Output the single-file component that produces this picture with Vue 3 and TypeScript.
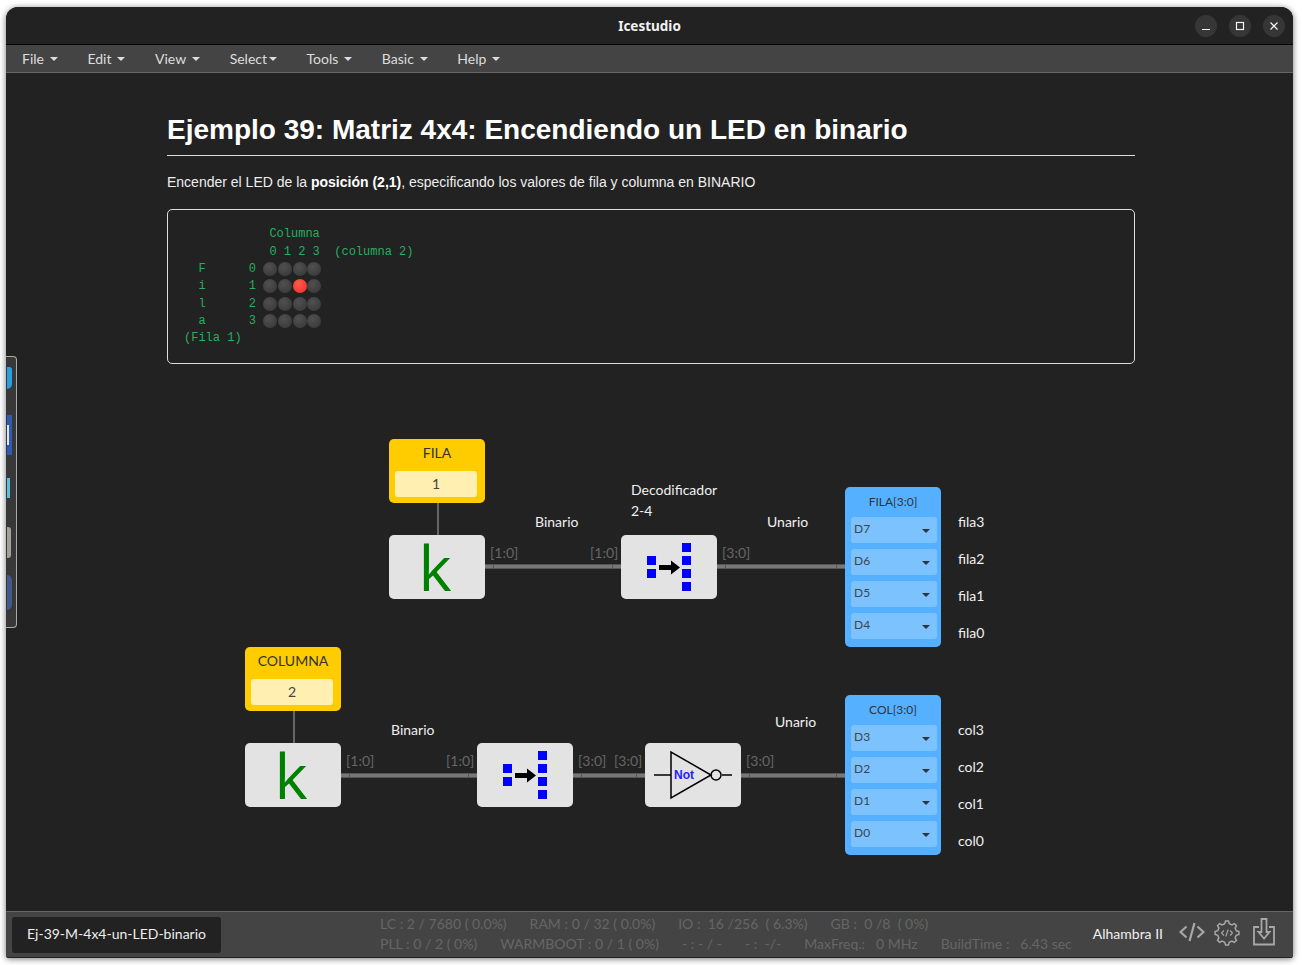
<template>
  <div class="desktop">
    <div class="window">
      <header class="titlebar">
        <span class="titlebar__name">Icestudio</span>
        <div class="titlebar__buttons">
          <button class="win-btn"><svg width="12" height="12" viewBox="0 0 12 12"><path d="M2 9.500h8" /></svg></button>
          <button class="win-btn"><svg width="12" height="12" viewBox="0 0 12 12"><rect x="2.500" y="2.500" width="7" height="7" /></svg></button>
          <button class="win-btn"><svg width="12" height="12" viewBox="0 0 12 12"><path d="M2.500 2.500l7 7M9.500 2.500l-7 7" /></svg></button>
        </div>
      </header>

      <nav class="menubar">
        <span v-for="m in menus" :key="m" :class="['menu', { 'is-tight': m === 'Select' }]">{{ m }}<i class="caret" /></span>
      </nav>

      <main class="content">
        <h1 class="heading">Ejemplo 39: Matriz 4x4: Encendiendo un LED en binario</h1>
        <p class="lead">Encender el LED de la <strong>posición (2,1)</strong>, especificando los valores de fila y columna en BINARIO</p>
        <pre class="code"><template v-for="(line, i) in codeHead" :key="i"><span class="code__line is-head">{{ line }}</span></template><span v-for="r in ledRows" :key="r.n" class="code__line">{{ r.text }}<i v-for="c in 4" :key="c" :class="['led', { 'is-on': r.on === c - 1 }]" /></span><span class="code__line">(Fila 1)</span></pre>

        <section class="canvas">
          <div v-for="w in wires" :key="`${w.x}-${w.y}`" class="wire" :style="box(w.x, w.y, w.w)" />
          <div v-for="v in stems" :key="v.x" class="stem" :style="box(v.x, v.y)" />
          <span v-for="t in busTags" :key="`${t.x}-${t.y}`" class="bus-tag" :style="box(t.x, t.y)">{{ t.text }}</span>
          <span v-for="t in notes" :key="`${t.x}-${t.y}`" class="note" :style="box(t.x, t.y)">{{ t.text }}</span>

          <div v-for="c in constants" :key="c.name" class="constant" :style="box(c.x, c.y)">
            <span class="constant__name">{{ c.name }}</span>
            <span class="constant__value">{{ c.value }}</span>
          </div>

          <div v-for="k in keys" :key="k.x" class="block block--k" :style="box(k.x, k.y)"><span>k</span></div>

          <div v-for="d in decoders" :key="d.x" class="block" :style="box(d.x, d.y)">
            <svg width="96" height="64" viewBox="0 0 96 64">
              <g fill="#0000ff">
                <rect x="26" y="21" width="9" height="9" /><rect x="26" y="34" width="9" height="9" />
                <rect x="61" y="8" width="9" height="9" /><rect x="61" y="21" width="9" height="9" />
                <rect x="61" y="34" width="9" height="9" /><rect x="61" y="47" width="9" height="9" />
              </g>
              <path d="M38 30h12v-4.500l9 7-9 7v-4.500h-12z" fill="#000" />
            </svg>
          </div>

          <div class="block" :style="box(645, 743)">
            <svg width="96" height="64" viewBox="0 0 96 64">
              <g fill="none" stroke="#000" stroke-width="1.500">
                <path d="M26 9v46l40-23zM9 32h17M77 32h10" />
                <circle cx="71" cy="32" r="5" />
              </g>
              <text x="29" y="36" class="not-label">Not</text>
            </svg>
          </div>

          <div v-for="o in outputs" :key="o.name" class="output" :style="box(o.x, o.y)">
            <span class="output__name">{{ o.name }}</span>
            <div v-for="p in o.pins" :key="p" class="pin"><span>{{ p }}</span><i class="pin__caret" /></div>
          </div>
        </section>
      </main>

      <footer class="statusbar">
        <div class="tab">Ej-39-M-4x4-un-LED-binario</div>
        <div class="stats">
          <div class="stats__row"><span v-for="s in statsTop" :key="s">{{ s }}</span></div>
          <div class="stats__row"><span v-for="s in statsBottom" :key="s">{{ s }}</span></div>
        </div>
        <span class="board">Alhambra II</span>
        <svg class="tool tool--code" width="26" height="20" viewBox="0 0 26 20"><path d="M7.500 4.500L1.500 10l6 5.500M18.500 4.500l6 5.500-6 5.500M15.500 1l-5 18" /></svg>
        <svg class="tool tool--gear" width="26" height="26" viewBox="0 0 26 26">
          <path :d="gearPath" stroke-width="1.500" />
          <path d="M10 10.500L7.500 13l2.500 2.500M16 10.500l2.500 2.500-2.500 2.500M14.200 9.500l-2.400 7" stroke-width="1.100" />
        </svg>
        <svg class="tool tool--save" width="24" height="28" viewBox="0 0 24 28"><path d="M7 9H2v17.500h20V9h-5M12 20.500l-5.500-6.500h3V1h5v13h3z" /></svg>
      </footer>

      <aside class="dock">
        <i v-for="(s, i) in dockItems" :key="i" :style="s" />
      </aside>
    </div>
  </div>
</template>

<script setup lang="ts">
const ORIGIN_X = 167
const ORIGIN_Y = 364

const menus = ['File', 'Edit', 'View', 'Select', 'Tools', 'Basic', 'Help']

const codeHead = [
  '            Columna',
  '            0 1 2 3  (columna 2)',
]
const ledRows = [
  { n: 0, text: '  F      0 ', on: -1 },
  { n: 1, text: '  i      1 ', on: 2 },
  { n: 2, text: '  l      2 ', on: -1 },
  { n: 3, text: '  a      3 ', on: -1 },
]

// everything on the canvas is written in window pixels, box() moves it to the canvas origin
function box(x: number, y: number, w?: number) {
  return { left: `${x - ORIGIN_X}px`, top: `${y - ORIGIN_Y}px`, ...(w ? { width: `${w}px` } : {}) }
}

const wires = [
  { x: 485, y: 564, w: 136 },
  { x: 717, y: 564, w: 128 },
  { x: 341, y: 773, w: 136 },
  { x: 573, y: 773, w: 72 },
  { x: 741, y: 773, w: 104 },
]
const stems = [{ x: 437, y: 503 }, { x: 293, y: 711 }]
const busTags = [
  { x: 490, y: 544, text: '[1:0]' }, { x: 590, y: 544, text: '[1:0]' }, { x: 722, y: 544, text: '[3:0]' },
  { x: 346, y: 752, text: '[1:0]' }, { x: 446, y: 752, text: '[1:0]' }, { x: 578, y: 752, text: '[3:0]' },
  { x: 614, y: 752, text: '[3:0]' }, { x: 746, y: 752, text: '[3:0]' },
]
const notes = [
  { x: 535, y: 513, text: 'Binario' }, { x: 631, y: 481, text: 'Decodificador' }, { x: 631, y: 502, text: '2-4' },
  { x: 767, y: 513, text: 'Unario' }, { x: 391, y: 721, text: 'Binario' }, { x: 775, y: 713, text: 'Unario' },
  { x: 958, y: 513, text: 'fila3' }, { x: 958, y: 550, text: 'fila2' }, { x: 958, y: 587, text: 'fila1' }, { x: 958, y: 624, text: 'fila0' },
  { x: 958, y: 721, text: 'col3' }, { x: 958, y: 758, text: 'col2' }, { x: 958, y: 795, text: 'col1' }, { x: 958, y: 832, text: 'col0' },
]
const constants = [
  { name: 'FILA', value: '1', x: 389, y: 439 },
  { name: 'COLUMNA', value: '2', x: 245, y: 647 },
]
const keys = [{ x: 389, y: 535 }, { x: 245, y: 743 }]
const decoders = [{ x: 621, y: 535 }, { x: 477, y: 743 }]
const outputs = [
  { name: 'FILA[3:0]', x: 845, y: 487, pins: ['D7', 'D6', 'D5', 'D4'] },
  { name: 'COL[3:0]', x: 845, y: 695, pins: ['D3', 'D2', 'D1', 'D0'] },
]

const statsTop = ['LC : 2 / 7680 ( 0.0%)', 'RAM : 0 / 32 ( 0.0%)', 'IO :  16 /256  ( 6.3%)', 'GB :  0 /8  ( 0%)']
const statsBottom = ['PLL : 0 / 2 ( 0%)', 'WARMBOOT : 0 / 1 ( 0%)', '- : - / -', '- :  -/-', 'MaxFreq.:   0 MHz', 'BuildTime :   6.43 sec']

// outline of a cog with 8 teeth
const gearPath = (() => {
  const pts: string[] = []
  const teeth = 8
  for (let i = 0; i < teeth; i++) {
    const a = (i / teeth) * Math.PI * 2
    const step = (Math.PI * 2) / teeth
    const corners: [number, number][] = [[9.500, -0.5], [12, -0.25], [12, 0.25], [9.500, 0.5]]
    for (const [r, f] of corners) {
      const t = a + f * step * 0.62
      pts.push(`${(13 + r * Math.cos(t)).toFixed(2)} ${(13 + r * Math.sin(t)).toFixed(2)}`)
    }
  }
  return `M${pts.join('L')}Z`
})()

const dockItems = [
  { top: '10px', height: '22px', width: '5px', background: '#2a9fe0', borderRadius: '0 4px 8px 0' },
  { top: '58px', height: '40px', width: '5px', background: 'linear-gradient(90deg,#dfe6f5 2px,transparent 2px) center/100% 20px no-repeat,#2f5bb5' },
  { top: '121px', height: '20px', width: '3px', background: '#5cc0dd' },
  { top: '170px', height: '31px', width: '4px', background: '#a2a29a', borderRadius: '0 3px 3px 0' },
  { top: '218px', height: '35px', width: '5px', background: '#42598c', borderRadius: '0 8px 8px 0' },
]
</script>

<style scoped>
.desktop { box-sizing: border-box; width: 1302px; height: 965px; padding: 7px 9px 7px 6px; }
.window { position: relative; display: flex; flex-direction: column; height: 100%; overflow: hidden; background: #222; border-radius: 12px 12px 3px 3px; box-shadow: 0 1px 6px rgba(0, 0, 0, .55); font-family: Lato, sans-serif; }

.titlebar { position: relative; display: flex; flex: 0 0 38px; align-items: center; justify-content: center; box-sizing: border-box; background: #222; border-bottom: 1px solid #000; }
.titlebar__name { color: #f2f2f2; font-family: "Noto Sans", sans-serif; font-size: 13.500px; font-weight: 700; }
.titlebar__buttons { position: absolute; top: 8px; right: 8px; display: flex; gap: 12px; }
.win-btn { display: flex; align-items: center; justify-content: center; width: 22px; height: 22px; padding: 0; background: #363636; border: 0; border-radius: 50%; }
.win-btn svg { fill: none; stroke: #f4f4f4; stroke-width: 1.200; }

.menubar { display: flex; flex: 0 0 28px; align-items: center; gap: 29.500px; box-sizing: border-box; padding: 0 0 1px 16px; background: #444; border-bottom: 1px solid #666; color: #ddd; font-size: 14px; }
.menu { display: flex; align-items: center; }
.caret { width: 0; height: 0; margin: 2px 0 0 6px; border-top: 4px solid #ddd; border-right: 4px solid transparent; border-left: 4px solid transparent; }
.menu.is-tight .caret { margin-left: 2px; }

.content { flex: 1; min-height: 0; width: 968px; margin-left: 161px; }
.heading { margin: 0; padding: 39px 0 7px; border-bottom: 1px solid #ddd; color: #fff; font: 700 28px/36px "Liberation Sans", sans-serif; }
.lead { margin: 16px 0 0; color: #eee; font: 14px/20px "Liberation Sans", sans-serif; }
.lead strong { color: #fff; }
.code { box-sizing: border-box; height: 155px; margin: 17px 0 0; padding: 16px 16px 0; border: 1px solid #ddd; border-radius: 5px; color: #27ae60; font: 12px/17.300px "Liberation Mono", monospace; }
.code__line { display: flex; align-items: center; height: 17.300px; white-space: pre; }
.code__line.is-head { height: 17.500px; margin-left: -1px; }
.led { width: 14px; height: 14px; margin: 0 .7px 1px 0; border-radius: 50%; background: radial-gradient(circle at 40% 35%, #505050, #3d3d3d 70%); }
.led.is-on { background: radial-gradient(circle at 40% 35%, #ff5a4e, #ef3a30 70%); }

.canvas { position: relative; height: 547px; }
.wire { position: absolute; box-sizing: border-box; height: 5px; background: #777; border-top: 1px solid #555; border-bottom: 1px solid #555; }
.wire::before, .wire::after { content: ''; position: absolute; top: -1px; width: 1px; height: 5px; background: #555; }
.wire::before { left: 8px; }
.wire::after { right: 8px; }
.stem { position: absolute; width: 2px; height: 32px; background: #666; }
.bus-tag { position: absolute; color: #666; font-size: 14px; line-height: 18px; }
.note { position: absolute; color: #f0f0f0; font-size: 14px; line-height: 18px; white-space: nowrap; }

.constant { position: absolute; display: flex; flex-direction: column; align-items: center; box-sizing: border-box; width: 96px; height: 64px; padding: 6px 8px 0 6px; background: #fc0; border-radius: 5px; color: #333; font-size: 14px; }
.constant__name { margin-left: 2px; line-height: 16px; }
.constant__value { width: 100%; margin-top: 10px; background: #ffefb0; border-radius: 3px; color: #444; line-height: 26px; text-align: center; }

.block { position: absolute; width: 96px; height: 64px; background: #e3e3e3; border-radius: 5px; }
.block svg { display: block; }
.block--k { display: flex; justify-content: center; box-sizing: border-box; padding-right: 4px; color: #008000; font: 63px/63px "Open Sans", sans-serif; }
.not-label { fill: #2222ff; font: 700 12px "Liberation Sans", sans-serif; }

.output { position: absolute; display: flex; flex-direction: column; gap: 6px; box-sizing: border-box; width: 96px; height: 160px; padding: 8px 4px 0 6px; background: #55b1ff; border-radius: 5px; color: #333; font-size: 12px; }
.output__name { margin: 0 2px 2px 0; line-height: 14px; text-align: center; }
.pin { display: flex; align-items: flex-start; justify-content: space-between; box-sizing: border-box; height: 26px; padding: 5px 7px 0 3px; background: #7cc2ff; border-radius: 3px; color: #444; line-height: 14px; }
.pin__caret { width: 0; height: 0; margin-top: 7px; border-top: 4.500px solid #333; border-right: 4px solid transparent; border-left: 4px solid transparent; }

.statusbar { display: flex; flex: 0 0 47px; align-items: center; box-sizing: border-box; padding: 0 17px 0 6px; background: #444; border-top: 1px solid #666; border-bottom: 1px solid #222; }
.tab { display: flex; align-items: center; justify-content: center; box-sizing: border-box; width: 209px; height: 36px; padding-bottom: 2px; background: #222; border-radius: 3px; color: #eee; font-size: 14px; }
.stats { flex: 1; margin: 0 0 2px 159px; color: #666; font-size: 14px; line-height: 20px; white-space: pre; word-spacing: .06px; }
.stats__row { display: flex; gap: 23px; }
.board { margin-bottom: 2px; color: #f0f0f0; font-size: 14px; }
.tool { flex: none; fill: none; stroke: #a8a8a8; stroke-width: 2; }
.tool--code { margin: 0 0 6px 16px; stroke-width: 2.200; }
.tool--gear { margin: 0 0 4px 9px; }
.tool--save { margin: 0 0 6px 12px; stroke-width: 1.800; }

.dock { position: absolute; top: 349px; left: 0; width: 11px; height: 272px; box-sizing: border-box; background: #383838; border: 1px solid #aaa; border-left: 0; border-radius: 0 4px 4px 0; }
.dock i { position: absolute; left: 1px; display: block; }
</style>

<style>
html, body { margin: 0; background: #fff; overflow: hidden; }
</style>
